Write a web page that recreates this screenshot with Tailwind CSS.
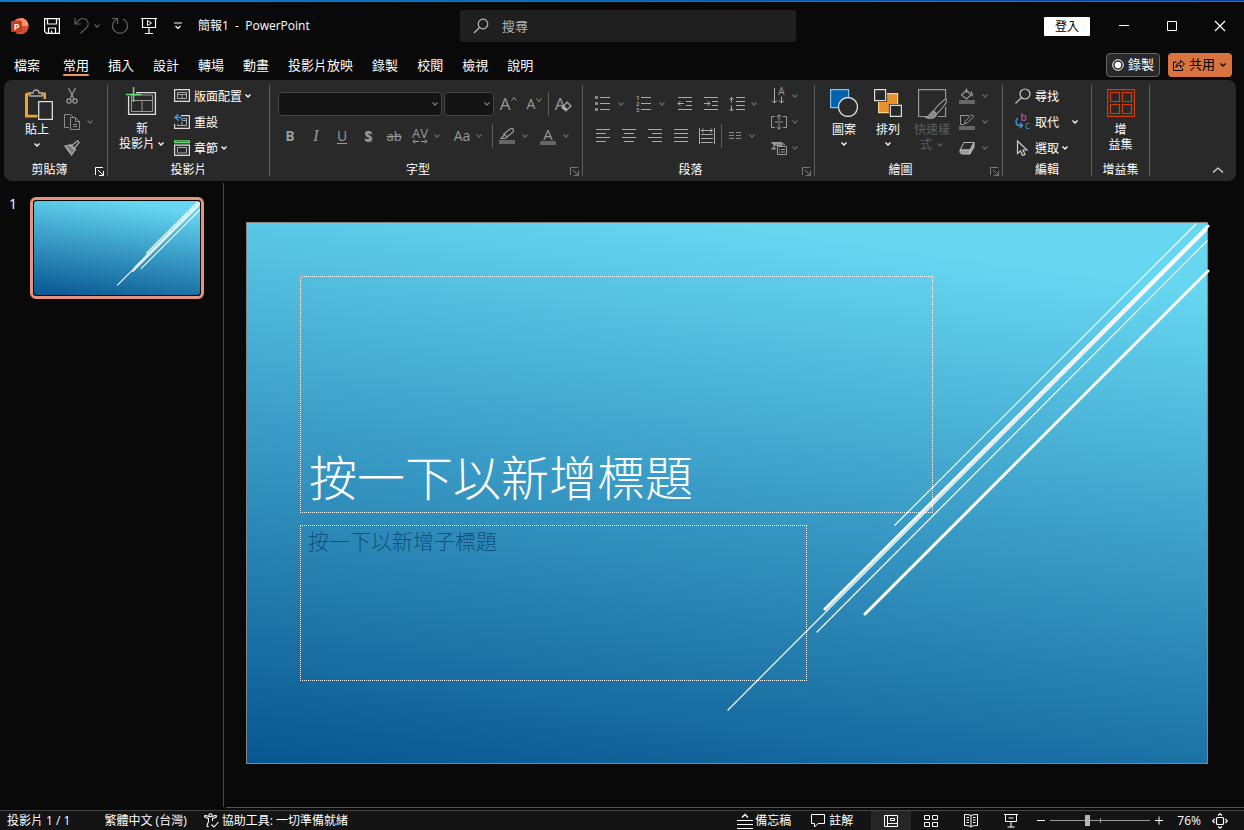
<!DOCTYPE html>
<html lang="zh-Hant">
<head>
    <meta charset="UTF-8">
    <meta name="viewport" content="width=device-width, initial-scale=1.0">
    <title>簡報1 - PowerPoint</title>
    <script src="https://cdn.jsdelivr.net/npm/@tailwindcss/browser@4"></script>
</head>
<body class="h-screen flex flex-col overflow-hidden bg-[#090909] text-white text-xs font-['Open_Sans','Noto_Sans_CJK_TC',sans-serif]">
    <!-- Shared shapes -->
    <svg class="hidden">
        <symbol id="chevron" viewBox="0 0 8 6"><path d="M1.5 1.5 4 4l2.500-2.500" fill="none" stroke="currentColor" stroke-width="1.300"/></symbol>
        <symbol id="launcher" viewBox="0 0 9 9"><path d="M.5 8V.5H8M3 3l5 5M8.500 4v4.500H4" fill="none" stroke="currentColor"/></symbol>
        <symbol id="screen" viewBox="0 0 16 18"><path d="M0 1.500h16M1.500 1.500v9h13v-9M8 10.500V16M4 16.500h8" fill="none" stroke="currentColor" stroke-width="1.200"/></symbol>
    </svg>

    <div class="h-[2px] shrink-0 border-b border-[#5d6670] bg-gradient-to-r from-[#0a7fd0] to-[#0a3f9f]"></div>

    <!-- Title bar -->
    <header class="h-12 shrink-0 flex items-center">
        <div class="flex-1 flex items-center">
            <svg class="ml-[11px] w-[18px] h-[18px]" viewBox="0 0 18 18"><circle cx="9.500" cy="9" r="8" fill="#ed6c47"/><path d="M9.500 1a8 8 0 0 1 8 8h-8z" fill="#ff8f6b"/><path d="M17.500 9a8 8 0 0 1-15.500 3L9.500 9z" fill="#d35230"/><rect y="4" width="11" height="11" rx="1" fill="#c43e1c"/><text x="5.500" y="13" text-anchor="middle" font-size="9" font-weight="700" fill="#fff">P</text></svg>
            <button class="ml-[15px]" aria-label="儲存"><svg class="w-4 h-4" viewBox="0 0 16 16" fill="none" stroke="#fff" stroke-width="1.200"><path d="M.6.6h14.800v14.800H2.600l-2-2zM3.500.6v5.400h9V.6M4.500 15.400V10h7v5.400M7.500 15v-2.500"/></svg></button>
            <button class="ml-[14px]" aria-label="復原"><svg class="w-4 h-[18px]" viewBox="0 0 16 18" fill="none" stroke="#5e5e5e" stroke-width="1.200"><path d="M1 1v6h6M1.300 6.700 5.500 2.800a5.300 5.300 0 0 1 7.500 7.400L6.500 16.500"/></svg></button>
            <button class="ml-[3px]" aria-label="復原選項"><svg class="w-2 h-1.5 text-[#5e5e5e]"><use href="#chevron"/></svg></button>
            <button class="ml-[10px]" aria-label="重複"><svg class="w-[18px] h-[18px]" viewBox="0 0 18 18" fill="none" stroke="#5e5e5e" stroke-width="1.200"><path d="M1 1.500h5.500V7M6 2a7.500 7.500 0 1 0 6 0"/></svg></button>
            <button class="ml-[12px]" aria-label="從首張投影片"><svg class="w-4 h-[18px] text-white" viewBox="0 0 16 18"><use href="#screen"/><path d="m6.500 3.500 4 2.500-4 2.500z" fill="none" stroke="#fff"/></svg></button>
            <button class="ml-[17px]" aria-label="自訂快速存取工具列"><svg class="w-2 h-2" viewBox="0 0 8 8" fill="none" stroke="#fff" stroke-width="1.200"><path d="M0 1h8M1.500 4 4 6.500 6.500 4"/></svg></button>
            <span class="ml-4 whitespace-pre">簡報1  -  PowerPoint</span>
        </div>
        <label class="ml-3 w-[336px] h-8 flex items-center rounded-[3px] bg-[#1f1f1f]">
            <svg class="ml-[13px] w-4 h-4" viewBox="0 0 16 16" fill="none" stroke="#bbb" stroke-width="1.200"><circle cx="10" cy="6" r="4.800"/><path d="M6.500 9.500 1 15"/></svg>
            <input type="search" placeholder="搜尋" aria-label="搜尋" class="ml-[13px] flex-1 min-w-0 h-5 bg-transparent text-[13px] placeholder:text-[#b5b5b5] outline-none">
        </label>
        <div class="flex-1 flex items-center justify-end">
            <button class="mr-[28px] w-[46px] h-[19px] leading-[19px] rounded-[1px] bg-white text-black">登入</button>
            <button class="mr-[36px]" aria-label="最小化"><svg class="w-3 h-3" viewBox="0 0 12 12"><path d="M1 5.500h10" stroke="#fff"/></svg></button>
            <button class="mr-[36px]" aria-label="最大化"><svg class="w-3 h-3" viewBox="0 0 12 12"><path d="M1.500 1.500h9v9h-9z" fill="none" stroke="#fff"/></svg></button>
            <button class="mr-[18px]" aria-label="關閉"><svg class="w-3 h-3" viewBox="0 0 12 12"><path d="m1 1 10 10M11 1 1 11" stroke="#fff" stroke-width="1.200"/></svg></button>
        </div>
    </header>

    <!-- Tabs -->
    <nav class="h-[30px] shrink-0 flex items-center justify-between pl-[14px] pr-3 text-[13px] whitespace-nowrap">
        <div class="flex gap-[19px] pt-0.5">
            <a href="#" class="mr-1">檔案</a>
            <a href="#" class="relative">常用<span class="absolute inset-x-0 -bottom-px h-[2px] rounded bg-[#e8956c]"></span></a>
            <a href="#">插入</a>
            <a href="#">設計</a>
            <a href="#">轉場</a>
            <a href="#">動畫</a>
            <a href="#">投影片放映</a>
            <a href="#">錄製</a>
            <a href="#">校閱</a>
            <a href="#">檢視</a>
            <a href="#">說明</a>
        </div>
        <div class="flex gap-2">
            <button class="w-[54px] h-6 flex items-center justify-center gap-1 rounded border border-[#666] bg-[#292929]">
                <svg class="w-3 h-3" viewBox="0 0 12 12"><circle cx="6" cy="6" r="5.300" fill="none" stroke="#fff"/><circle cx="6" cy="6" r="3.300" fill="#fff"/></svg>錄製
            </button>
            <button class="w-16 h-6 flex items-center justify-center gap-1 rounded bg-[#d9733f] text-black">
                <svg class="w-3 h-3" viewBox="0 0 12 12" fill="none" stroke="#000"><path d="M3.500 3H.5v8.500h9V9M3 8.500C3 5 5 3.800 7.500 3.800V1.300L11.500 5 7.500 8.500V6.200C5.500 6.200 4 6.800 3 8.500z"/></svg>共用<svg class="w-2 h-1.5"><use href="#chevron"/></svg>
            </button>
        </div>
    </nav>

    <!-- Ribbon -->
    <section class="mx-1 mr-2 h-[101px] shrink-0 flex rounded-lg bg-[#292929] leading-[15px] whitespace-nowrap">
        <!-- Clipboard -->
        <div class="w-[103px] pt-[3px] flex flex-col">
            <div class="h-[79px] pb-px flex">
                <button class="ml-[11px] w-11 flex flex-col items-center pt-[6px]">
                    <svg class="w-8 h-8" viewBox="-4 0 32 32" fill="none"><path d="M1.500 5h18v5M1.500 4.500V27h11" stroke="#eda033" stroke-width="3"/><path d="M3.500 6.500h15v19h-15z" fill="#292929"/><path d="M5 7V4h3a3 3 0 0 1 6 0h3v3z" fill="#292929" stroke="#aaa" stroke-width="1.300"/><path d="M13.700 12.700h13.600v17.600H13.700z" fill="#292929" stroke="#ddd" stroke-width="1.300"/></svg>
                    <span class="mt-px">貼上</span>
                    <svg class="mt-[5px] w-2 h-1.5"><use href="#chevron"/></svg>
                </button>
                <div class="grid grid-rows-3 text-[#666]">
                    <button class="w-[26px] flex items-center justify-center" aria-label="剪下"><svg class="w-4 h-4" viewBox="0 0 16 16" fill="none" stroke="#9a9a9a" stroke-width="1.200"><path d="m4.500 0 5.500 11M11.500 0 6 11"/><circle cx="5" cy="13" r="2.200"/><circle cx="11" cy="13" r="2.200"/></svg></button>
                    <button class="flex items-center pl-[5px]" aria-label="複製"><svg class="w-4 h-4" viewBox="0 0 16 16" fill="none" stroke="#8a8a8a"><path d="M5 13.500H.5V.5h6l3 3M6.500 3.500h5l4 4v8h-9zM11.500 3.500v4h4M9 10.500h4M9 12.500h4"/></svg><svg class="ml-[6px] w-2 h-1.5"><use href="#chevron"/></svg></button>
                    <button class="w-[26px] flex items-center justify-center" aria-label="複製格式"><svg class="w-4 h-4" viewBox="0 0 16 16" fill="none" stroke="#aaa" stroke-width="1.200"><path d="m1 6 5-1 5 5-3.500 5z" fill="#777"/><path d="m6 4 6 6M8 5.500 13.500.8l1.700 1.700-4.700 5.500M3 8l4 5"/></svg></button>
                </div>
            </div>
            <div class="relative text-center pr-3">剪貼簿<button class="absolute right-[3px] top-[5px]" aria-label="剪貼簿選項"><svg class="w-[9px] h-[9px]"><use href="#launcher"/></svg></button></div>
        </div>
        <div class="w-px my-[5px] bg-[#5f5f5f]"></div>

        <!-- Slides -->
        <div class="w-[161px] pt-[3px] flex flex-col">
            <div class="h-[79px] pb-px flex">
                <button class="ml-2 w-[52px] flex flex-col items-center pt-1">
                    <svg class="w-8 h-[30px]" viewBox="2 1 32 30" fill="none"><path d="M5.600 6.600h25.800v21.800H4.600V10" stroke="#ddd" stroke-width="1.300"/><path d="M7.500 9h21v16.500h-21zM7.500 14.500h21M18 14.500v11" stroke="#999"/><path d="M3 9V4h9v5z" fill="#292929"/><path d="M9.500 1v15M2 8.500h15" stroke="#6bdc78" stroke-width="1.500"/></svg>
                    <span class="mt-1">新</span>
                    <span class="flex items-center gap-0.5">投影片<svg class="w-2 h-1.5"><use href="#chevron"/></svg></span>
                </button>
                <div class="ml-[6px] grid grid-rows-3">
                    <button class="flex items-center"><svg class="mr-1 w-4 h-4" viewBox="0 0 16 16" fill="none"><path d="M.6 1.600h14.800v11.800H.6z" stroke="#ddd" stroke-width="1.200"/><path d="M3.500 4.500h9v6h-9zM3.500 6.500h9M8 6.500v4" stroke="#aaa"/></svg>版面配置<svg class="ml-0.5 w-2 h-1.5"><use href="#chevron"/></svg></button>
                    <button class="flex items-center"><svg class="mr-1 w-4 h-4" viewBox="0 0 16 16" fill="none"><path d="M7 1.600h8.400v12.800H.6V10" stroke="#ddd" stroke-width="1.200"/><path d="M9 4.500h3.500v7h-9V10M9 6.500h3.500M8 8v3" stroke="#aaa"/><path d="M4.500 0 1 3.300l3.500 3.200M1.500 3.300H5c2.500 0 3 1.700 3 4" stroke="#3a96dd" stroke-width="1.500"/></svg>重設</button>
                    <button class="flex items-center"><svg class="mr-1 w-4 h-4" viewBox="0 0 16 16" fill="none"><path d="M.6.8h14.800v1.800H.6z" stroke="#6bdc78" stroke-width="1.200"/><path d="M.6 5.200h14.800v10.200H.6z" stroke="#ddd" stroke-width="1.200"/><path d="M3.500 7.500h9v5.500h-9z" stroke="#aaa"/></svg>章節<svg class="ml-0.5 w-2 h-1.5"><use href="#chevron"/></svg></button>
                </div>
            </div>
            <div class="text-center">投影片</div>
        </div>
        <div class="w-px my-[5px] bg-[#5f5f5f]"></div>

        <!-- Font -->
        <div class="w-[312px] pt-[3px] flex flex-col">
            <div class="h-[79px] pt-[9px] flex flex-col gap-2 text-[#9a9a9a]">
                <div class="h-6 flex items-center pl-2">
                    <div class="relative w-[164px] h-6"><select aria-label="字型" class="w-full h-full appearance-none rounded border border-[#464646] bg-[#141414]"></select><svg class="absolute right-[3px] top-[9px] w-2 h-1.5 text-[#777]"><use href="#chevron"/></svg></div>
                    <div class="relative ml-[2px] w-[50px] h-6"><select aria-label="字型大小" class="w-full h-full appearance-none rounded border border-[#464646] bg-[#141414]"></select><svg class="absolute right-[3px] top-[9px] w-2 h-1.5 text-[#777]"><use href="#chevron"/></svg></div>
                    <button class="ml-[2px] w-[26px] pb-0.5 flex items-center justify-center text-[17px]" aria-label="放大字型">A<svg class="mb-2 w-2 h-1.5" viewBox="0 0 8 6"><path d="m1.500 4.500 2.500-3 2.500 3" fill="none" stroke="currentColor"/></svg></button>
                    <button class="w-[26px] flex items-center justify-center text-sm" aria-label="縮小字型">A<svg class="mb-2 w-2 h-1.5" viewBox="0 0 8 6"><path d="m1.500 1.500 2.500 3 2.500-3" fill="none" stroke="currentColor"/></svg></button>
                    <div class="w-px h-6 bg-[#5f5f5f]"></div>
                    <button class="relative w-[26px] pb-0.5 pr-1 text-[17px]" aria-label="清除格式">A<svg class="absolute right-[3px] top-[5px] w-[11px] h-[11px]" viewBox="0 0 10 10"><path d="m1 6 4.500-5L9 4.500 4.500 9z" fill="#292929" stroke="#aaa" stroke-width="1.200"/><path d="m1 6 1.700-1.800L6 7.500 4.500 9z" fill="#aaa"/></svg></button>
                </div>
                <div class="h-6 flex items-center pl-[7px] text-sm">
                    <button class="w-[26px] font-bold">B</button>
                    <button class="w-[26px] italic font-['Liberation_Serif',serif] text-base">I</button>
                    <button class="w-[26px] underline underline-offset-2">U</button>
                    <button class="w-[26px] font-bold [text-shadow:1px_1px_1px_#888]">S</button>
                    <button class="w-[26px] line-through text-[13px]">ab</button>
                    <button class="w-[26px] flex flex-col items-center leading-[11px] text-[13px]" aria-label="字元間距">AV<svg class="w-4 h-[5px]" viewBox="0 0 16 5" fill="none" stroke="currentColor"><path d="M1 2.500h6M9 2.500h6M3 .5l-2 2 2 2M13 .5l2 2-2 2"/></svg></button>
                    <svg class="w-2 h-1.5 text-[#666]"><use href="#chevron"/></svg>
                    <button class="ml-2 w-[26px] text-sm">Aa</button>
                    <svg class="w-2 h-1.5 text-[#666]"><use href="#chevron"/></svg>
                    <div class="ml-[9px] w-px h-6 bg-[#5f5f5f]"></div>
                    <button class="ml-[1px] w-[26px] flex justify-center" aria-label="醒目提示"><svg class="w-4 h-4" viewBox="0 0 16 16" fill="none" stroke="#9a9a9a" stroke-width="1.200"><path d="m5 6 6-5q2-1 3 0t0 3L8 9zM5 6 4.500 8 2 10.500h4L8 9" /><path d="M0 14h16" stroke="#666" stroke-width="4"/></svg></button>
                    <svg class="ml-[1px] w-2 h-1.5 text-[#666]"><use href="#chevron"/></svg>
                    <button class="ml-[6px] w-[26px] flex flex-col items-center leading-[13px] text-[15px]" aria-label="字型色彩">A<span class="w-4 h-1 bg-[#666]"></span></button>
                    <svg class="ml-[1px] w-2 h-1.5 text-[#666]"><use href="#chevron"/></svg>
                </div>
            </div>
            <div class="relative text-center pr-4">字型<button class="absolute right-[3px] top-[5px] text-[#777]" aria-label="字型選項"><svg class="w-[9px] h-[9px]"><use href="#launcher"/></svg></button></div>
        </div>
        <div class="w-px my-[5px] bg-[#5f5f5f]"></div>

        <!-- Paragraph -->
        <div class="w-[231px] pt-[3px] flex flex-col">
            <div class="h-[79px] pb-px flex text-[#aaa]">
                <div class="w-[176px] pl-[7px] pt-[9px] flex flex-col gap-2">
                    <div class="h-6 flex items-center">
                        <button class="w-[26px] flex justify-center" aria-label="項目符號"><svg class="w-4 h-4" viewBox="0 0 16 16"><path d="M0 0h3v3H0zM0 6h3v3H0zM0 12h3v3H0z" fill="#888"/><path d="M5 1.500H15M5 7.500H15M5 13.500H15" stroke="currentColor"/></svg></button>
                        <svg class="ml-px w-2 h-1.5 text-[#666]"><use href="#chevron"/></svg>
                        <button class="ml-[6px] w-[26px] flex justify-center" aria-label="編號"><svg class="w-4 h-4 overflow-visible" viewBox="0 0 16 16"><g fill="#999" font-size="6" font-weight="700"><text x="0" y="4">1</text><text x="0" y="10">2</text><text x="0" y="16">3</text></g><path d="M5 1.500H15M5 7.500H15M5 13.500H15" stroke="currentColor"/></svg></button>
                        <svg class="ml-px w-2 h-1.5 text-[#666]"><use href="#chevron"/></svg>
                        <button class="ml-[6px] w-[26px] flex justify-center" aria-label="減少縮排"><svg class="w-4 h-4" viewBox="0 0 16 16" fill="none" stroke="currentColor"><path d="M1 1.500h14M9 5.500h6M9 9.500h6M1 13.500h14M1 7.500h6M3.500 5 1 7.500 3.500 10"/></svg></button>
                        <button class="w-[26px] flex justify-center" aria-label="增加縮排"><svg class="w-4 h-4" viewBox="0 0 16 16" fill="none" stroke="currentColor"><path d="M1 1.500h14M9 5.500h6M9 9.500h6M1 13.500h14M1 7.500h6M4.500 5 7 7.500 4.500 10"/></svg></button>
                        <button class="w-[26px] flex justify-center" aria-label="行距"><svg class="w-4 h-4" viewBox="0 0 16 16" fill="none" stroke="currentColor"><path d="M7 1.500h9M7 5.500h9M7 9.500h9M7 13.500h9M2.500 1.500v5M.5 3.500l2-2 2 2M2.500 9.500V15M.5 13l2 2 2-2"/></svg></button>
                        <svg class="w-2 h-1.5 text-[#666]"><use href="#chevron"/></svg>
                    </div>
                    <div class="h-6 flex items-center">
                        <button class="w-[26px] flex justify-center" aria-label="靠左對齊"><svg class="w-4 h-4" viewBox="0 0 16 16" stroke="currentColor"><path d="M1 1.500h14M1 5.500h10M1 9.500h14M1 13.500h10"/></svg></button>
                        <button class="w-[26px] flex justify-center" aria-label="置中"><svg class="w-4 h-4" viewBox="0 0 16 16" stroke="currentColor"><path d="M1 1.500h14M3 5.500h10M1 9.500h14M3 13.500h10"/></svg></button>
                        <button class="w-[26px] flex justify-center" aria-label="靠右對齊"><svg class="w-4 h-4" viewBox="0 0 16 16" stroke="currentColor"><path d="M1 1.500h14M5 5.500h10M1 9.500h14M5 13.500h10"/></svg></button>
                        <button class="w-[26px] flex justify-center" aria-label="左右對齊"><svg class="w-4 h-4" viewBox="0 0 16 16" stroke="currentColor"><path d="M1 1.500h14M1 5.500h14M1 9.500h14M1 13.500h14"/></svg></button>
                        <button class="w-[26px] flex justify-center" aria-label="分散對齊"><svg class="w-4 h-4" viewBox="0 0 16 16" fill="none" stroke="currentColor"><path d="M.5 0v16M15.500 0v16M2 6.500h12M2 10.500h12M2 14.500h12M2.500 2.500h11M4.500.5l-2 2 2 2M11.500.5l2 2-2 2"/></svg></button>
                        <div class="ml-[1px] w-px h-6 bg-[#5f5f5f]"></div>
                        <button class="w-[26px] flex justify-center" aria-label="欄"><svg class="w-3 h-4" viewBox="0 0 12 16" stroke="#888"><path d="M0 4.500h5M0 7.500h5M0 10.500h5M7 4.500h5M7 7.500h5M7 10.500h5"/></svg></button>
                        <svg class="w-2 h-1.5 text-[#666]"><use href="#chevron"/></svg>
                    </div>
                </div>
                <div class="ml-3 grid grid-rows-3">
                    <button class="flex items-center gap-1" aria-label="文字方向"><svg class="w-4 h-[18px]" viewBox="0 0 16 18" fill="none" stroke="currentColor"><path d="M3.500 1v15M1 13.500 3.500 16 6 13.500M10.500 9.500V16M8 13.500l2.500 2.500 2.500-2.500"/><text x="10.500" y="8" text-anchor="middle" font-size="10" fill="#999" stroke="none">A</text></svg><svg class="w-2 h-1.5 text-[#666]"><use href="#chevron"/></svg></button>
                    <button class="flex items-center gap-1" aria-label="對齊文字"><svg class="w-4 h-4" viewBox="0 0 16 16" fill="none" stroke="#999"><path d="M4 2.500H.5v11H4M12 2.500h3.500v11H12M4 8h8M8 1v5.500M5.500 3 8 .8 10.500 3M8 9.500V15M5.500 13 8 15.200l2.500-2.200"/></svg><svg class="w-2 h-1.5 text-[#666]"><use href="#chevron"/></svg></button>
                    <button class="flex items-center gap-1" aria-label="轉換成 SmartArt"><svg class="w-4 h-4" viewBox="0 0 16 16" fill="none" stroke="#999"><path d="M.5 2.500h10L14 5M.5 2.500 4 6 .5 9H5M2 3.500h9v2H5z" fill="#777"/><path d="M6.500 6.500h9v8h-9z" fill="#292929"/><path d="M8 9.500h1M8 12h1M10 9.500h4M10 12h4"/></svg><svg class="w-2 h-1.5 text-[#666]"><use href="#chevron"/></svg></button>
                </div>
            </div>
            <div class="relative text-center pr-4">段落<button class="absolute right-[3px] top-[5px] text-[#777]" aria-label="段落選項"><svg class="w-[9px] h-[9px]"><use href="#launcher"/></svg></button></div>
        </div>
        <div class="w-px my-[5px] bg-[#5f5f5f]"></div>

        <!-- Drawing -->
        <div class="w-[187px] pt-[3px] flex flex-col">
            <div class="h-[79px] pb-px flex pl-[7px]">
                <button class="w-11 flex flex-col items-center pt-[6px]">
                    <svg class="w-7 h-7" viewBox="0 0 28 28"><path d="M.6.6h18v18H.6z" fill="#0063b1" stroke="#83beec" stroke-width="1.200"/><circle cx="18" cy="18" r="9.500" fill="#292929" stroke="#ddd" stroke-width="1.300"/></svg>
                    <span class="mt-[5px]">圖案</span>
                    <svg class="mt-1 w-2 h-1.5"><use href="#chevron"/></svg>
                </button>
                <button class="w-11 flex flex-col items-center pt-[6px]">
                    <svg class="w-7 h-7" viewBox="0 0 28 28"><path d="M4.600 4.600h19v19h-19z" fill="#e8912d" stroke="#f8d090" stroke-width="1.200"/><path d="M.6.6h11v11H.6zM16.400 16.400h11v11h-11z" fill="#292929" stroke="#292929" stroke-width="3"/><path d="M.6.6h11v11H.6zM16.400 16.400h11v11h-11z" fill="none" stroke="#ddd" stroke-width="1.200"/></svg>
                    <span class="mt-[5px]">排列</span>
                    <svg class="mt-1 w-2 h-1.5"><use href="#chevron"/></svg>
                </button>
                <button class="w-11 flex flex-col items-center pt-[6px] text-[#5e5e5e]">
                    <svg class="w-[30px] h-[30px]" viewBox="-1 0 30 30" fill="none" stroke="#999" stroke-width="1.200"><path d="M10 27.500H.6V.6h27V11M27.600 18v9.500H20"/><path d="M28.500 10.500c2 1.500-6 11-10 14.500l-3-3c3-4 11-13 13-11.500z" fill="#292929"/><path d="M15.500 22c-3 0-2.500 5-7.500 6.500 5 2 10 .5 10.500-3.500z" fill="#888"/></svg>
                    <span class="mt-[3px]">快速樣</span>
                    <span class="flex items-center gap-1">式<svg class="w-2 h-1.5"><use href="#chevron"/></svg></span>
                </button>
                <div class="ml-[5px] grid grid-rows-3 text-[#666]">
                    <button class="flex items-center gap-[6px]" aria-label="圖案填滿"><svg class="w-4 h-4" viewBox="0 0 16 16" fill="none" stroke="#999" stroke-width="1.200"><path d="m2.500 7 5-5 4.500 5-4.500 4zM7.500 5V.5M11.500 3.500q2 1 2 5"/><path d="M0 14h16" stroke="#666" stroke-width="4"/></svg><svg class="w-2 h-1.5"><use href="#chevron"/></svg></button>
                    <button class="flex items-center gap-[6px]" aria-label="圖案外框"><svg class="w-4 h-4" viewBox="0 0 16 16" fill="none" stroke="#999"><path d="M10 1.500H1.500v9H5M15 2.500 8 9l-2.500 1L6 7.500 12.500.8z"/><path d="M0 14h16" stroke="#666" stroke-width="4"/></svg><svg class="w-2 h-1.5"><use href="#chevron"/></svg></button>
                    <button class="flex items-center gap-[6px]" aria-label="圖案效果"><svg class="w-4 h-4" viewBox="0 0 16 16" stroke="#bbb" stroke-linejoin="round"><path d="m5 2.500 10 0-4 7.500H1z" fill="#292929"/><path d="M1 10h10v4H2.500L1 12.500zM11 10l4-7.500V7l-4 7z" fill="#999"/></svg><svg class="w-2 h-1.5"><use href="#chevron"/></svg></button>
                </div>
            </div>
            <div class="relative text-center pr-4">繪圖<button class="absolute right-[3px] top-[5px] text-[#777]" aria-label="繪圖選項"><svg class="w-[9px] h-[9px]"><use href="#launcher"/></svg></button></div>
        </div>
        <div class="w-px my-[5px] bg-[#5f5f5f]"></div>

        <!-- Editing -->
        <div class="w-[88px] pt-[3px] flex flex-col">
            <div class="h-[79px] pb-px grid grid-rows-3 pl-3">
                <button class="flex items-center gap-1"><svg class="w-4 h-4" viewBox="0 0 16 16" fill="none" stroke="#ccc" stroke-width="1.200"><circle cx="10" cy="6" r="5"/><path d="M6.500 9.500.5 15.500"/></svg>尋找</button>
                <button class="flex items-center gap-1"><svg class="w-4 h-4 overflow-visible" viewBox="0 0 16 16" fill="none" stroke-width="1.400"><g font-size="10"><text x="5.500" y="7" fill="#c36bc8">b</text><text x="10" y="15" fill="#3a96dd">c</text></g><path d="M3 4C0 6 .5 11 4 11.500h3M5 9l2.500 2.500L5 14" stroke="#3a96dd"/></svg>取代<svg class="ml-2 w-2 h-1.5"><use href="#chevron"/></svg></button>
                <button class="flex items-center gap-1"><svg class="w-4 h-4" viewBox="0 0 16 16" fill="none" stroke="#ccc" stroke-width="1.200"><path d="M2.500 1v12.500L5.500 11l2 4.500 2.500-1L8 10h4z"/></svg><span>選取</span><svg class="-ml-0.5 w-2 h-1.5"><use href="#chevron"/></svg></button>
            </div>
            <div class="text-center">編輯</div>
        </div>
        <div class="w-px my-[5px] bg-[#5f5f5f]"></div>

        <!-- Add-ins -->
        <div class="w-[57px] pt-[3px] flex flex-col">
            <button class="h-[79px] flex flex-col items-center pt-[6px]">
                <svg class="w-7 h-7" viewBox="0 0 28 28" fill="none" stroke="#d83b01" stroke-width="1.200"><path d="M.6.6h26.800v26.800H.6zM3.500 3.500h9v9h-9zM15.500 3.500h9v9h-9zM3.500 15.500h9v9h-9zM15.500 15.500h9v9h-9z"/></svg>
                <span class="mt-[5px]">增</span>
                <span>益集</span>
            </button>
            <div class="text-center">增益集</div>
        </div>
        <div class="w-px my-[5px] bg-[#5f5f5f]"></div>
        <button class="ml-auto mt-auto mr-3 mb-2" aria-label="摺疊功能區"><svg class="w-3 h-[6px]" viewBox="0 0 12 6"><path d="m1 5.500 5-4.500 5 4.500" fill="none" stroke="#ddd" stroke-width="1.200"/></svg></button>
    </section>

    <!-- Workspace -->
    <main class="flex-1 min-h-0 flex">
        <aside class="w-[224px] shrink-0 mt-0.5 mb-[3px] border-r border-[#4a4a4a] pt-[14px] pl-[9px] flex items-start">
            <span class="w-[21px] text-sm leading-[14px]">1</span>
            <button class="w-[174px] h-[102px] rounded-md border-[3px] border-[#e9937f] p-px" aria-label="投影片 1">
                <span class="block w-full h-full rounded-[3px] overflow-hidden bg-[linear-gradient(188deg,#66d6f1_10%,#3a9cc6_50%,#075690_100%)]"><svg class="w-full h-full" viewBox="0 0 962 542" fill="none" stroke="#fff" stroke-width="6"><path d="M950 2 649 303M961 8 482 488M961 19 571 410"/><path d="M962 4 579 387M962 49 619 392" stroke-width="6"/></svg></span>
            </button>
        </aside>
        <div class="flex-1 flex flex-col ml-[2px] mb-[2px] border-b border-[#555]">
            <!-- Slide -->
            <div class="relative mt-[41px] ml-5 mr-9 aspect-[962/542] border border-[#858585] bg-[linear-gradient(188deg,#66d6f1_10%,#3a9cc6_50%,#075690_100%)] font-['Noto_Sans_CJK_TC',sans-serif]">
                <svg class="absolute -inset-px w-[calc(100%+2px)] h-[calc(100%+2px)] overflow-visible" viewBox="0 0 962 542" fill="none" stroke="#fff" stroke-linecap="round"><path d="M950 2 649 303M961 8 482 488M961 19 571 410" stroke-width="1.200"/><path d="M962 4 579 387M962 49 619 392" stroke-width="3"/></svg>
                <div class="h-full pt-[53px] pl-[53px] flex flex-col gap-3">
                    <div class="w-[69.8%] h-[48.6%] border border-dotted border-white px-2 pb-[3px] flex items-end">
                        <h1 class="text-5xl leading-[68px] font-light">按一下以新增標題</h1>
                    </div>
                    <div class="w-[55.9%] h-[32%] border border-dotted border-white px-[7px]">
                        <p class="text-[21px] leading-[28px] font-light text-[#134f7c]">按一下以新增子標題</p>
                    </div>
                </div>
            </div>
        </div>
    </main>

    <!-- Status bar -->
    <footer class="h-5 shrink-0 flex items-center border-t border-[#444] bg-[#141414] pl-[7px] pr-4 leading-[19px] whitespace-nowrap">
        <span>投影片 1 / 1</span>
        <span class="ml-[34px]">繁體中文 (台灣)</span>
        <button class="ml-[17px] flex items-center gap-[3px]"><svg class="w-[15px] h-[15px]" viewBox="0 0 15 15" fill="none" stroke="#fff" stroke-width="1.100"><circle cx="6.500" cy="2.300" r="1.600"/><path d="M5 3.500 1.500 2.500C0 2.500.5 4 1.500 4.500l3 1v3L3 12.500c0 1.500 1 1.500 1.500.5M8 3.500l3.500-1c1.500 0 1 1.500 0 2l-3 1V8M7.500 11.500l2.500 2.500 4.500-5"/></svg>協助工具: 一切準備就緒</button>
        <button class="ml-auto flex items-center gap-0.5"><svg class="w-4 h-4" viewBox="0 0 16 16" fill="none" stroke="#fff"><path d="M0 7.500h16M0 11.500h16M0 15.500h16"/><path d="m5 4.500 3-3 3 3" stroke-width="1.400"/></svg>備忘稿</button>
        <button class="ml-5 flex items-center gap-1"><svg class="w-[14px] h-[14px]" viewBox="0 0 14 14" fill="none" stroke="#fff"><path d="M.5.5h13v9H7L3.500 13V9.500h-3z"/></svg>註解</button>
        <button class="ml-[18px] w-10 h-[19px] flex items-center justify-center bg-[#262626]" aria-label="標準模式"><svg class="w-[14px] h-3" viewBox="0 0 14 12" fill="none" stroke="#fff"><path d="M.5.5h13v11H.5zM3.500.5v11M3.500 8.500h10M6.500 3.500h4v2h-4z"/></svg></button>
        <button class="w-10 flex justify-center" aria-label="投影片瀏覽"><svg class="w-[14px] h-3" viewBox="0 0 14 12" fill="none" stroke="#fff"><path d="M.5.5h5v4h-5zM8.500.5h5v4h-5zM.5 7.500h5v4h-5zM8.500 7.500h5v4h-5z"/></svg></button>
        <button class="w-10 flex justify-center" aria-label="閱讀檢視"><svg class="w-[14px] h-[14px]" viewBox="0 0 14 14" fill="none" stroke="#fff"><path d="M7 1.500C5 .5 2.500.5.5.5v11c2 0 4.500 0 6.500 1.500 2-1.500 4.500-1.500 6.500-1.500V.5c-2 0-4.500 0-6.500 1zv11M2.500 3.500H5M2.500 6H5M2.500 8.500H5M9 3.500h2.500M9 6h2.500M9 8.500h2.500"/></svg></button>
        <button class="w-10 flex justify-center" aria-label="投影片放映"><svg class="w-[14px] h-[14px]" viewBox="0 0 14 14" fill="none" stroke="#fff"><path d="M0 .5h14M1.500.5v7h11v-7M4.500 4h5M7 8v5M3.500 13h7"/></svg></button>
        <button class="ml-1 w-3 h-3" aria-label="縮小"><svg class="w-3 h-3" viewBox="0 0 12 12"><path d="M2 5.500h8" stroke="#fff"/></svg></button>
        <div class="relative ml-[3px] w-[100px] h-[13px] flex items-center">
            <span class="absolute left-1/2 top-1 w-px h-[5px] bg-[#999]"></span>
            <input type="range" min="0" max="100" value="37" aria-label="縮放" class="relative w-full h-[11px] appearance-none bg-[linear-gradient(#999,#999)] bg-[length:100%_1px] bg-center bg-no-repeat [&::-webkit-slider-thumb]:appearance-none [&::-webkit-slider-thumb]:w-[5px] [&::-webkit-slider-thumb]:h-[11px] [&::-webkit-slider-thumb]:bg-[#b5b5b5]">
        </div>
        <button class="ml-[3px] w-3 h-3" aria-label="放大"><svg class="w-3 h-3" viewBox="0 0 12 12"><path d="M2 5.500h8M6 1.500v8" stroke="#fff"/></svg></button>
        <button class="ml-3">76%</button>
        <button class="ml-[11px]" aria-label="調整至視窗大小"><svg class="w-4 h-4" viewBox="0 0 16 16" fill="none" stroke="#fff" stroke-width="1.200"><rect x="4.500" y="4.500" width="7" height="7" rx="1"/><path d="M6 2.500 8 .8l2 1.700M6 13.500l2 1.700 2-1.700M2.500 6 .8 8l1.700 2M13.500 6l1.700 2-1.700 2"/></svg></button>
    </footer>
</body>
</html>
